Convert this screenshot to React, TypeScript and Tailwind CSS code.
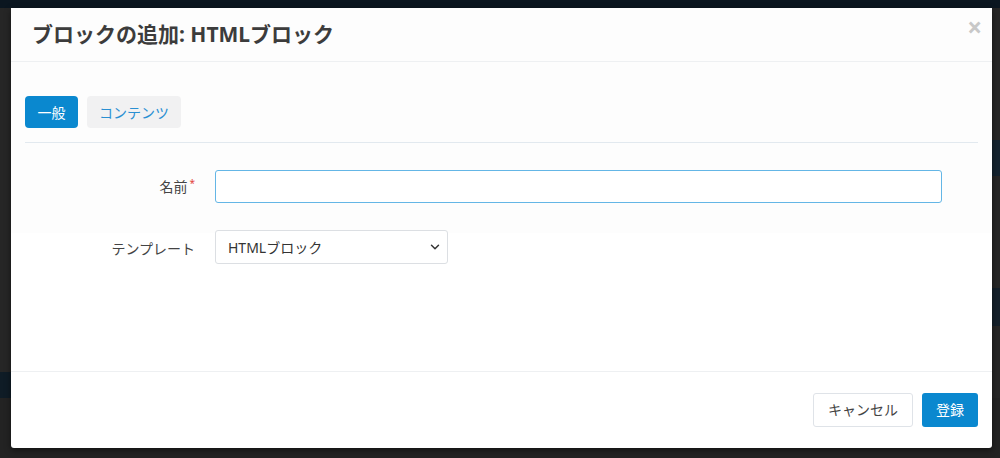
import { ChevronDown } from "lucide-react";

const jp = { fontFamily: '"Noto Sans", "Noto Sans CJK JP", sans-serif' };

export default function App() {
  return (
    <div className="relative h-[458px] w-[1000px] overflow-hidden bg-[#262626]" style={jp}>
      {/* page behind the overlay */}
      <div className="flex h-full flex-col">
        <div className="h-[8px] bg-[#0b1620]" />
        <div className="h-[132px]" />
        <div className="flex h-[36px] justify-end">
          <div className="w-[10px] bg-[#14232f]" />
        </div>
        <div className="h-[112px]" />
        <div className="flex h-[38px] justify-end">
          <div className="w-[10px] bg-[#14202a]" />
        </div>
        <div className="h-[46px]" />
        <div className="h-[26px] w-[12px] bg-[#0f1c26]" />
        <div className="flex-1 bg-[#232323]" />
      </div>

      {/* modal */}
      <div className="absolute left-[11px] top-[8px] flex h-[440px] w-[981px] flex-col rounded-[3px] bg-white shadow-[0_2px_6px_rgba(0,0,0,0.5)]">
        {/* header */}
        <div className="relative flex h-[54px] shrink-0 items-center border-b border-[#eef0f2] bg-[#fdfdfd] px-[21px]">
          <h2 className="text-[21px] font-bold text-[#3c3c3c]">ブロックの追加: HTMLブロック</h2>
          <span className="absolute right-[10px] top-[6px] text-[26px] font-bold leading-none text-[#c8c8c8]">×</span>
        </div>

        {/* body */}
        <div className="flex flex-1 flex-col">
          <div className="bg-[#fdfdfd] px-[14px] pt-[34px]">
            <div className="flex gap-[9px]">
              <button className="h-[32px] rounded-[4px] bg-[#0a88cf] px-[12.5px] text-[14px] text-white">一般</button>
              <button className="h-[32px] rounded-[4px] bg-[#f1f1f2] px-[12px] text-[14px] text-[#2a8fd2]">コンテンツ</button>
            </div>
            <div className="mt-[14px] h-px bg-[#e2e9ef]" />
            <div className="flex items-center pb-[30px] pt-[27px]">
              <label className="w-[190px] pr-[20px] text-right text-[14px] text-[#444]">
                名前<span className="ml-[2px] align-top text-[10px] text-[#e2453c]">*</span>
              </label>
              <input className="h-[33px] w-[727px] rounded-[3px] border border-[#64b6e6] bg-white px-3 outline-none" />
            </div>
          </div>
          <div className="flex items-center px-[14px]">
            <label className="w-[190px] pr-[20px] text-right text-[14px] text-[#444]">テンプレート</label>
            <div className="mt-[-3px] flex h-[34px] w-[233px] items-center justify-between rounded-[3px] border border-[#dcdfe3] bg-white pl-[12px] pr-[5px] text-[14px] text-[#333]">
              <span>HTMLブロック</span>
              <ChevronDown className="h-[14px] w-[14px] text-[#333]" strokeWidth={2.5} />
            </div>
          </div>
        </div>

        {/* footer */}
        <div className="flex h-[77px] shrink-0 items-center justify-end gap-[9px] border-t border-[#eef0f2] px-[14px] pb-[1px]">
          <button className="h-[34px] rounded-[3px] border border-[#dfe3e8] bg-white px-[14px] text-[14px] text-[#444]">キャンセル</button>
          <button className="h-[34px] rounded-[3px] bg-[#0a88cf] px-[14px] text-[14px] text-white">登録</button>
        </div>
      </div>
    </div>
  );
}
